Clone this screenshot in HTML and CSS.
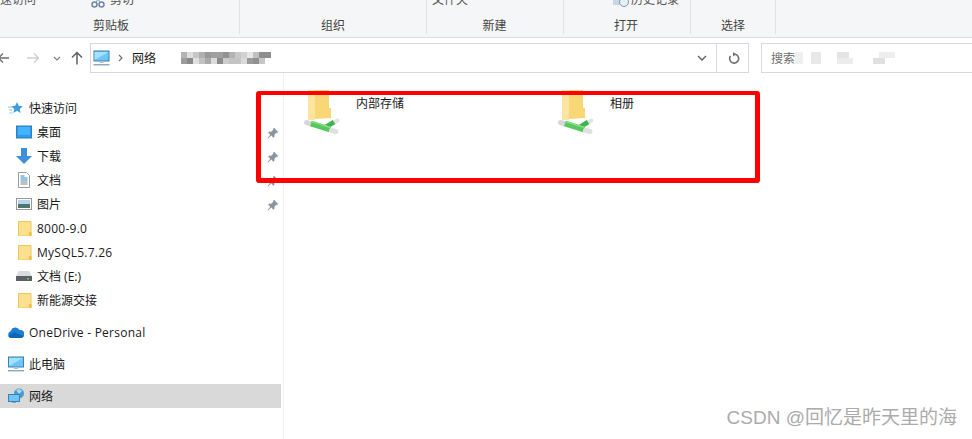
FILE: index.html

```html
<!DOCTYPE html>
<html lang="zh-CN">
<head>
  <meta charset="UTF-8" />
  <title>网络</title>
  <link rel="stylesheet" href="styles.css">
</head>
<body>
  <svg class="defs" width="0" height="0">
    <symbol id="folder" viewBox="0 0 16 16">
      <path d="M2.500 1.500H15V16H2.500z" fill="#fde08d" stroke="#efc65c"/>
      <path d="M13 16v-4h2.500v4z" fill="#f0c040"/>
    </symbol>
    <symbol id="pin" viewBox="0 0 12 12">
      <path d="M7 .8l4.200 4.200-1 1-.8-.3-2 2 .1 2-1.100 1-2.100-2.100L1 11.500l-.5-.5 2.800-3.200-2.100-2.100 1-1.100 2 .1 2-2L6 1.800z" fill="#8b949e"/>
    </symbol>
    <symbol id="share" viewBox="0 0 38 46">
      <path d="M5 0h7v30H5z" fill="#fde59f"/>
      <path d="M12 0h14v18h2v10l-16 1z" fill="#f8d777"/>
      <path d="M3.500 32.500l5 1.500" stroke="#d6d8d7" stroke-width="5" stroke-linecap="round"/>
      <path d="M30 33l4.500-2.500" stroke="#e2e4e3" stroke-width="4" stroke-linecap="round"/>
      <path d="M23 37l8-5" stroke="#3cb453" stroke-width="5"/>
      <path d="M8 33.500l19 6" stroke="#58c85e" stroke-width="6"/>
      <path d="M8.500 31.500l19 6" stroke="#86de82" stroke-width="1.500"/>
      <path d="M28.500 40.500l4.500 1" stroke="#dfe1e0" stroke-width="5" stroke-linecap="round"/>
    </symbol>
    <symbol id="monitor" viewBox="0 0 16 16">
      <rect x=".5" y="1" width="15" height="10" fill="#6cc6fb" stroke="#3f7fae"/>
      <path d="M1 2h14L1 10z" fill="#a4e1ff"/>
      <path d="M6 11h4v2H6z" fill="#b3c0cc"/>
      <path d="M0 14h16v1.500H0z" fill="#94a9bd"/>
    </symbol>
  </svg>

  <div class="ribbon">
    <div class="group group-clip">
      <div class="clipped">
        <span class="clip-access">快速访问</span>
        <svg class="scissors" width="14" height="10" viewBox="0 0 14 10"><circle cx="3.500" cy="5.500" r="2.500" fill="none" stroke="#6e87a8" stroke-width="1.500"/><circle cx="10.500" cy="5.500" r="2.500" fill="none" stroke="#6e87a8" stroke-width="1.500"/><path d="M5 3.500L8 -2M9 3.500L6 -2" stroke="#8696aa"/></svg>
        <span>剪切</span>
      </div>
      <div class="group-name">剪贴板</div>
    </div>
    <div class="group group-org">
      <div class="clipped"></div>
      <div class="group-name">组织</div>
    </div>
    <div class="group group-new">
      <div class="clipped"><span class="clip-new">文件夹</span></div>
      <div class="group-name">新建</div>
    </div>
    <div class="group group-open">
      <div class="clipped">
        <svg class="history" width="16" height="10" viewBox="0 0 16 10"><rect x="0" y="-6" width="11" height="12" fill="#c9d6e6"/><circle cx="11" cy="3" r="4.500" fill="#e8eef6" stroke="#7d97b8"/></svg>
        <span>历史记录</span>
      </div>
      <div class="group-name">打开</div>
    </div>
    <div class="group group-select">
      <div class="clipped"></div>
      <div class="group-name">选择</div>
    </div>
  </div>

  <div class="navbar">
    <div class="nav-btns">
      <svg class="nav-back" width="10" height="12" viewBox="0 0 10 12"><path d="M9 6H-2M3 1.500L-1.500 6 3 10.500" fill="none" stroke="#6d6d6d" stroke-width="1.300"/></svg>
      <svg class="nav-fwd" width="12" height="12" viewBox="0 0 12 12"><path d="M0 6h11M7 1.500L11.500 6 7 10.500" fill="none" stroke="#cfcfcf" stroke-width="1.300"/></svg>
      <svg class="nav-more" width="8" height="5" viewBox="0 0 8 5"><path d="M1 1l3 3 3-3" fill="none" stroke="#808080" stroke-width="1.200"/></svg>
      <svg class="nav-up" width="12" height="14" viewBox="0 0 12 14"><path d="M6 13.500V1.500M1 6.500l5-5 5 5" fill="none" stroke="#606060" stroke-width="1.500"/></svg>
    </div>
    <div class="address">
      <svg class="addr-icon" width="17" height="16"><use href="#monitor"/></svg>
      <svg class="addr-sep" width="5" height="8" viewBox="0 0 5 8"><path d="M1 1l3 3-3 3" fill="none" stroke="#707070" stroke-width="1.200"/></svg>
      <span class="addr-text">网络</span>
      <svg class="mosaic" width="90" height="12" shape-rendering="crispEdges">
        <rect x="0" width="6" height="6" fill="#b4b4b4"/><rect x="6" width="6" height="6" fill="#dedede"/><rect x="12" width="6" height="6" fill="#c6c6c6"/><rect x="18" width="6" height="6" fill="#b0b0b0"/><rect x="24" width="6" height="6" fill="#9a9a9a"/><rect x="30" width="12" height="6" fill="#a0a0a0"/><rect x="42" width="6" height="6" fill="#929292"/><rect x="48" width="6" height="6" fill="#b2b2b2"/><rect x="54" width="6" height="6" fill="#c8c8c8"/><rect x="60" width="6" height="6" fill="#d2d2d2"/><rect x="66" width="6" height="6" fill="#e8e8e8"/><rect x="72" width="6" height="6" fill="#c0c0c0"/><rect x="78" width="12" height="6" fill="#8e8e8e"/>
        <rect x="0" y="6" width="6" height="6" fill="#9c9c9c"/><rect x="6" y="6" width="6" height="6" fill="#8a8a8a"/><rect x="12" y="6" width="6" height="6" fill="#e0e0e0"/><rect x="18" y="6" width="6" height="6" fill="#c2c2c2"/><rect x="24" y="6" width="6" height="6" fill="#aaaaaa"/><rect x="30" y="6" width="6" height="6" fill="#dcdcdc"/><rect x="36" y="6" width="6" height="6" fill="#8c8c8c"/><rect x="42" y="6" width="6" height="6" fill="#cccccc"/><rect x="48" y="6" width="12" height="6" fill="#c4c4c4"/><rect x="60" y="6" width="6" height="6" fill="#dadada"/><rect x="66" y="6" width="6" height="6" fill="#9a9a9a"/><rect x="72" y="6" width="6" height="6" fill="#909090"/><rect x="78" y="6" width="6" height="6" fill="#c6c6c6"/>
      </svg>
      <svg class="addr-down" width="10" height="6" viewBox="0 0 10 6"><path d="M1 1l4 4 4-4" fill="none" stroke="#606060" stroke-width="1.400"/></svg>
      <div class="refresh">
        <svg width="12" height="12" viewBox="0 0 12 12"><path d="M7 2.200A4.500 4.500 0 1 1 2.500 4" fill="none" stroke="#707070" stroke-width="1.600"/><path d="M5 0l3.200 2.200L5 4.500z" fill="#707070"/></svg>
      </div>
    </div>
    <div class="search">
      <span>搜索</span>
      <svg class="mosaic" width="100" height="12" shape-rendering="crispEdges">
        <rect x="0" width="8" height="12" fill="#efefef"/><rect x="16" width="10" height="12" fill="#e8e8e8"/><rect x="42" width="12" height="6" fill="#e4e4e4"/><rect x="42" y="6" width="16" height="6" fill="#ececec"/><rect x="78" y="6" width="12" height="6" fill="#e0e0e0"/><rect x="84" width="16" height="6" fill="#eeeeee"/>
      </svg>
    </div>
  </div>

  <div class="main">
    <nav class="sidebar">
      <div class="tree">
        <div class="row top"><svg class="icon" width="16" height="16" viewBox="0 0 16 16"><path d="M9 2l1.700 3.800 4.100.4-3.100 2.700.9 4L9 10.800 5.400 12.900l.9-4-3.100-2.700 4.100-.4z" fill="#3b9ce0"/><path d="M0 7h4M1 10h3M1.500 13h3" stroke="#8cc8ef"/></svg>快速访问</div>
        <div class="row sub"><svg class="icon" width="16" height="14" viewBox="0 0 16 14"><rect x=".5" y="1" width="15" height="12" fill="#2d9cf0" stroke="#2f7fb8"/><path d="M2 2h12v8H2z" fill="#45b3fb"/></svg>桌面<svg class="pin"><use href="#pin"/></svg></div>
        <div class="row sub"><svg class="icon" width="16" height="16" viewBox="0 0 16 16"><path d="M5 0h6v8h5l-8 8-8-8h5z" fill="#3f8fdc"/></svg>下载<svg class="pin"><use href="#pin"/></svg></div>
        <div class="row sub"><svg class="icon" width="16" height="16" viewBox="0 0 16 16"><path d="M2.500.5h8l3 3v12h-11z" fill="#fff" stroke="#9a9a9a"/><path d="M4.500 4h4M4.500 6h7M4.500 8h7" stroke="#2d8ccc"/><path d="M4.500 10h7M4.500 12h7" stroke="#6d8a80"/></svg>文档<svg class="pin"><use href="#pin"/></svg></div>
        <div class="row sub"><svg class="icon" width="16" height="12" viewBox="0 0 16 12"><rect x=".5" y=".5" width="15" height="11" fill="#fff" stroke="#9a9a9a"/><rect x="2" y="2" width="12" height="4" fill="#b5d4ef"/><rect x="2" y="6" width="12" height="4" fill="#4e7668"/></svg>图片<svg class="pin"><use href="#pin"/></svg></div>
        <div class="row sub"><svg class="icon" width="16" height="16"><use href="#folder"/></svg><span class="latin">8000-9.0</span></div>
        <div class="row sub"><svg class="icon" width="16" height="16"><use href="#folder"/></svg><span class="latin">MySQL5.7.26</span></div>
        <div class="row sub"><svg class="icon" width="16" height="10" viewBox="0 0 16 10"><path d="M3 0h10l3 5v5H0V5z" fill="#d9dcde"/><rect x="0" y="5" width="16" height="5" fill="#5c6166"/><rect x="11" y="7" width="2" height="1.500" fill="#57d15b"/></svg>文档 (E:)</div>
        <div class="row sub"><svg class="icon" width="16" height="16"><use href="#folder"/></svg>新能源交接</div>
      </div>
      <div class="tree">
        <div class="row top"><svg class="icon" width="16" height="11" viewBox="0 0 16 11"><path d="M3.500 11a3.500 3.500 0 0 1-.6-6.900A4.600 4.600 0 0 1 11.500 3 4 4 0 0 1 13 11z" fill="#1a7fd0"/><path d="M3.500 11c-1.500 0-2.700-.8-3.200-2L6 5.500 15.600 9c-.5 1.200-1.400 2-2.600 2z" fill="#0e66b5"/></svg><span class="latin">OneDrive - Personal</span></div>
      </div>
      <div class="tree">
        <div class="row top"><svg class="icon" width="16" height="16"><use href="#monitor"/></svg>此电脑</div>
      </div>
      <div class="tree">
        <div class="row top active"><svg class="icon" width="16" height="16" viewBox="0 0 16 16"><circle cx="11" cy="5.500" r="5" fill="#4d9bd0"/><path d="M8 2c2-1.500 5-1 6 1l-3 3z" fill="#a8d8f2"/><rect x=".5" y="6.500" width="11" height="7" fill="#6cc6fb" stroke="#3f7fae"/><path d="M4 14h4v1H4z" fill="#8aa4bc"/></svg>网络</div>
      </div>
    </nav>
    <div class="files">
      <div class="item">
        <svg class="share-icon" width="38" height="46"><use href="#share"/></svg>
        <span>内部存储</span>
      </div>
      <div class="item">
        <svg class="share-icon" width="38" height="46"><use href="#share"/></svg>
        <span>相册</span>
      </div>
    </div>
  </div>

  <div class="highlight"></div>
  <div class="watermark">CSDN @回忆是昨天里的海</div>
</body>
</html>
```

FILE: styles.css

```css
* { box-sizing: border-box; }
html, body { margin: 0; height: 439px; overflow: hidden; background: #fff; }
body { font-family: "Open Sans", "Noto Sans CJK SC", sans-serif; font-size: 12px; color: #1a1a1a; position: relative; }
.defs { position: absolute; }

.ribbon { display: flex; height: 38px; background: #f5f6f7; border-bottom: 1px solid #dadbdc; padding-bottom: 3px; overflow: hidden; }
.group { height: 34px; border-right: 1px solid #e1e2e3; display: flex; flex-direction: column; }
.group-clip { width: 240px; }
.group-org { width: 187px; }
.group-new { width: 137px; padding-right: 1px; }
.group-open { width: 127px; padding-right: 2px; }
.group-select { width: 85px; }
.clipped { height: 18px; margin-top: -9px; display: flex; align-items: center; line-height: 18px; color: #555; }
.group-name { text-align: center; color: #444; line-height: 16px; margin-top: 9px; }
.group-clip .group-name { padding-right: 17px; }
.clip-access { margin-left: -12px; }
.scissors { margin-left: 55px; margin-top: 8px; margin-right: 5px; }
.clip-new { margin-left: 5px; }
.history { margin-left: 49px; margin-top: 8px; margin-right: 2px; }

.navbar { display: flex; align-items: stretch; height: 30px; margin-top: 5px; }
.nav-btns { width: 90px; display: flex; align-items: center; }
.nav-back { margin-right: 17px; }
.nav-fwd { margin-right: 14px; }
.nav-more { margin-right: 10px; }
.address { width: 659px; border: 1px solid #d9d9d9; display: flex; align-items: center; padding-left: 2px; }
.addr-icon { margin-right: 8px; }
.addr-sep { margin-right: 9px; }
.addr-text { margin-right: 25px; }
.addr-down { margin-left: auto; margin-right: 9px; }
.refresh { width: 32px; height: 100%; border-left: 1px solid #d9d9d9; display: flex; align-items: center; justify-content: center; padding-left: 3px; }
.search { margin-left: 12px; flex: 1; border: 1px solid #d9d9d9; border-right: none; display: flex; align-items: center; padding-left: 9px; color: #6d6d6d; }

.main { display: flex; height: 366px; }
.sidebar { width: 284px; border-right: 1px solid #f1f1f1; padding-top: 23px; }
.tree { margin-bottom: 8px; }
.row { height: 24px; width: 281px; display: flex; align-items: center; color: #1a1a1a; }
.row.top { padding-left: 8px; }
.row.sub { padding-left: 16px; }
.row.active { background: #d9d9d9; }
.icon { width: 16px; margin-right: 5px; flex: none; }
.latin { letter-spacing: .25px; }
.pin { width: 12px; height: 12px; margin-left: auto; margin-right: 2px; margin-top: 2px; }

.files { flex: 1; display: flex; overflow: hidden; padding-left: 19px; }
.item { width: 254px; display: flex; align-items: flex-start; }
.share-icon { margin-top: 17px; flex: none; }
.item span { margin-left: 15px; line-height: 18px; margin-top: 22px; }

.highlight { position: absolute; left: 256px; top: 91px; width: 504px; height: 92px; border: 5px solid #fe0000; border-top-width: 4px; border-radius: 3px; }
.watermark { position: absolute; right: 15px; top: 408px; font-family: "Liberation Sans", "Noto Sans CJK SC", sans-serif; font-size: 19px; line-height: 20px; color: #ababab; }
```
